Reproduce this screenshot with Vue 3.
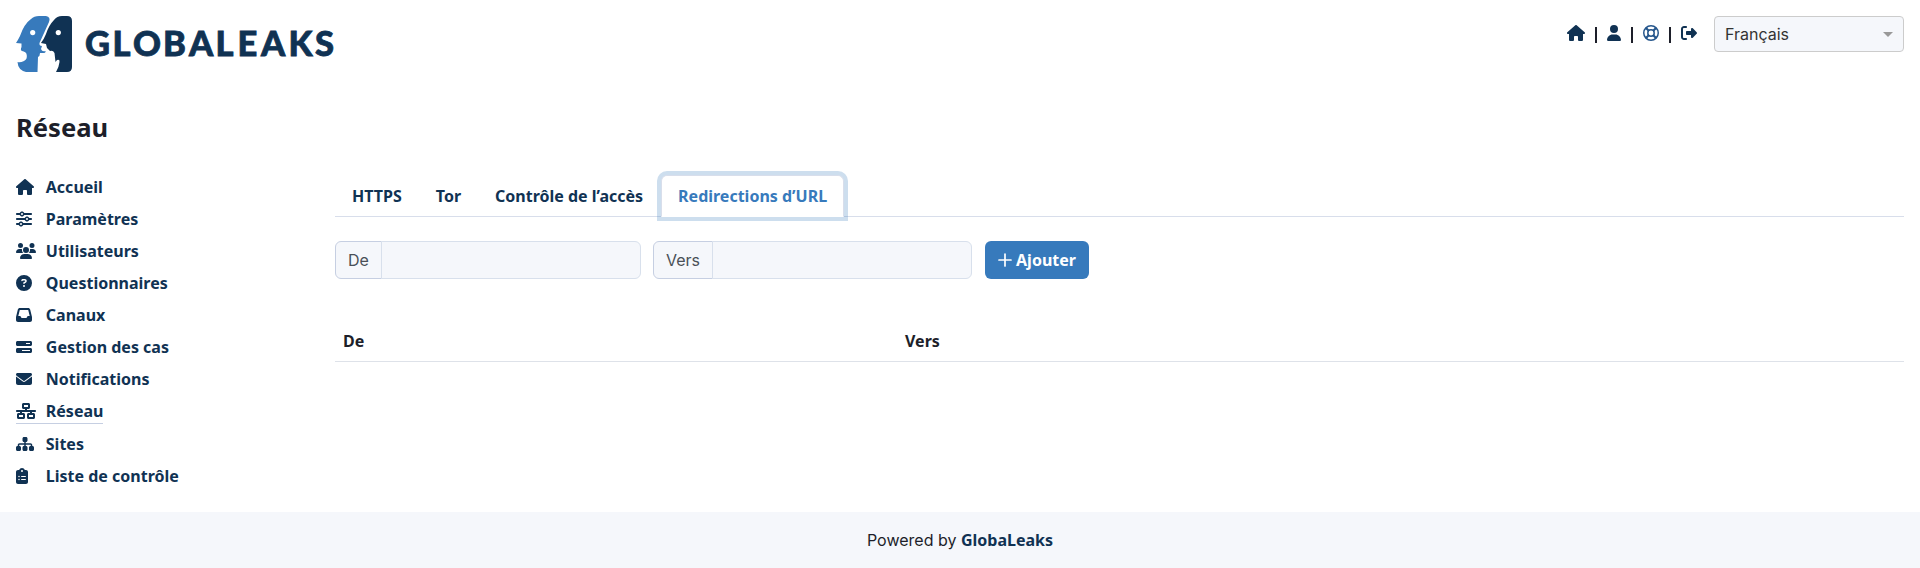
<script setup>
const paths = {
  house: 'M575.8 255.5c0 18-15 32.1-32 32.1h-32l.7 160.2c0 2.7-.2 5.4-.5 8.1V472c0 22.1-17.9 40-40 40H392c-22.1 0-40-17.9-40-40V384c0-17.7-14.3-32-32-32H256c-17.7 0-32 14.3-32 32v88c0 22.1-17.9 40-40 40H104c-22.1 0-40-17.9-40-40V287.6H32c-18 0-32-14-32-32.1c0-9 3-17 10-24L266.4 8c7-7 15-8 22-8s15 2 21 7L564.8 231.5c8 7 12 15 11 24z',
  user: 'M224 256A128 128 0 1 0 224 0a128 128 0 1 0 0 256zm-45.7 48C79.8 304 0 383.8 0 482.3C0 498.7 13.3 512 29.7 512H418.3c16.4 0 29.7-13.3 29.7-29.7C448 383.8 368.2 304 269.7 304H178.3z',
  exit: 'M377.9 105.9L500.7 228.7c7.2 7.2 11.3 17.1 11.3 27.3s-4.1 20.1-11.3 27.3L377.9 406.1c-6.4 6.4-15 9.9-24 9.9c-18.7 0-33.9-15.2-33.9-33.9l0-62.1-128 0c-17.7 0-32-14.3-32-32l0-64c0-17.7 14.3-32 32-32l128 0 0-62.1c0-18.7 15.2-33.9 33.9-33.9c9 0 17.6 3.6 24 9.9zM160 96L96 96c-17.7 0-32 14.3-32 32l0 256c0 17.7 14.3 32 32 32l64 0c17.7 0 32 14.3 32 32s-14.3 32-32 32l-64 0c-53 0-96-43-96-96L0 128C0 75 43 32 96 32l64 0c17.7 0 32 14.3 32 32s-14.3 32-32 32z',
  sliders: 'M0 416c0 17.7 14.3 32 32 32l54.7 0c12.3 28.3 40.5 48 73.3 48s61-19.7 73.3-48L480 448c17.7 0 32-14.3 32-32s-14.3-32-32-32l-246.7 0c-12.3-28.3-40.5-48-73.3-48s-61 19.7-73.3 48L32 384c-17.7 0-32 14.3-32 32zm128 0a32 32 0 1 1 64 0 32 32 0 1 1 -64 0zM320 256a32 32 0 1 1 64 0 32 32 0 1 1 -64 0zm32-80c-32.8 0-61 19.7-73.3 48L32 224c-17.7 0-32 14.3-32 32s14.3 32 32 32l246.7 0c12.3 28.3 40.5 48 73.3 48s61-19.7 73.3-48l54.7 0c17.7 0 32-14.3 32-32s-14.3-32-32-32l-54.7 0c-12.3-28.3-40.5-48-73.3-48zM192 128a32 32 0 1 1 0-64 32 32 0 1 1 0 64zm73.3-64C253 35.7 224.8 16 192 16s-61 19.7-73.3 48L32 64C14.3 64 0 78.3 0 96s14.3 32 32 32l86.7 0c12.3 28.3 40.5 48 73.3 48s61-19.7 73.3-48L480 128c17.7 0 32-14.3 32-32s-14.3-32-32-32L265.3 64z',
  users: 'M144 0a80 80 0 1 1 0 160A80 80 0 1 1 144 0zM512 0a80 80 0 1 1 0 160A80 80 0 1 1 512 0zM0 298.7C0 239.8 47.8 192 106.7 192h42.7c15.9 0 31 3.5 44.6 9.7c-1.3 7.2-1.9 14.7-1.9 22.3c0 38.2 16.8 72.5 43.3 96H21.3C9.6 320 0 310.4 0 298.7zM405.3 320c26.6-23.5 42.6-57.8 42.6-96c0-7.6-.7-15-1.9-22.3c13.6-6.3 28.7-9.7 44.6-9.7h42.7C592.2 192 640 239.8 640 298.7c0 11.8-9.6 21.3-21.3 21.3H405.3zM224 224a96 96 0 1 1 192 0 96 96 0 1 1 -192 0zM128 485.3C128 411.7 187.7 352 261.3 352H378.7C452.3 352 512 411.7 512 485.3c0 14.7-11.9 26.7-26.7 26.7H154.7c-14.7 0-26.7-11.9-26.7-26.7z',
  question: 'M256 512A256 256 0 1 0 256 0a256 256 0 1 0 0 512zM169.8 165.3c7.9-22.3 29.1-37.3 52.8-37.3h58.3c34.9 0 63.1 28.3 63.1 63.1c0 22.6-12.1 43.5-31.7 54.8L280 264.4c-.2 13-10.9 23.6-24 23.6c-13.3 0-24-10.7-24-24V250.5c0-8.6 4.6-16.5 12.1-20.8l44.3-25.4c4.7-2.7 7.6-7.7 7.6-13.1c0-8.4-6.8-15.1-15.1-15.1H222.6c-3.4 0-6.4 2.1-7.5 5.3l-.4 1.2c-4.4 12.5-18.2 19-30.6 14.6s-19-18.2-14.6-30.6l.4-1.2zM224 352a32 32 0 1 1 64 0 32 32 0 1 1 -64 0z',
  inbox: 'M121 32C91.6 32 66 52 58.9 80.5L1.9 308.4C.6 313.5 0 318.7 0 323.9V416c0 35.3 28.7 64 64 64H448c35.3 0 64-28.7 64-64V323.9c0-5.2-.6-10.4-1.9-15.5l-57-227.9C446 52 420.4 32 391 32H121zm0 64H391l48 192H387.8c-12.1 0-23.2 6.8-28.6 17.7l-14.3 28.6c-5.4 10.8-16.5 17.7-28.6 17.7H195.8c-12.1 0-23.2-6.8-28.6-17.7l-14.3-28.6c-5.4-10.8-16.5-17.7-28.6-17.7H73L121 96z',
  progress: 'M448 160H320V128H448v32zM48 64C21.5 64 0 85.5 0 112v64c0 26.5 21.5 48 48 48H464c26.5 0 48-21.5 48-48V112c0-26.5-21.5-48-48-48H48zM448 352v32H192V352H448zM48 288c-26.5 0-48 21.5-48 48v64c0 26.5 21.5 48 48 48H464c26.5 0 48-21.5 48-48V336c0-26.5-21.5-48-48-48H48z',
  envelope: 'M48 64C21.5 64 0 85.5 0 112c0 15.1 7.1 29.3 19.2 38.4L236.8 313.6c11.4 8.5 27 8.5 38.4 0L492.8 150.4c12.1-9.1 19.2-23.3 19.2-38.4c0-26.5-21.5-48-48-48H48zM0 176V384c0 35.3 28.7 64 64 64H448c35.3 0 64-28.7 64-64V176L294.4 339.2c-22.8 17.1-54 17.1-76.8 0L0 176z',
  network: 'M256 64H384v64H256V64zM240 0c-26.5 0-48 21.5-48 48v96c0 26.5 21.5 48 48 48h48v32H32c-17.7 0-32 14.3-32 32s14.3 32 32 32h96v32H80c-26.5 0-48 21.5-48 48v96c0 26.5 21.5 48 48 48H240c26.5 0 48-21.5 48-48V368c0-26.5-21.5-48-48-48H192V288H448v32H400c-26.5 0-48 21.5-48 48v96c0 26.5 21.5 48 48 48H560c26.5 0 48-21.5 48-48V368c0-26.5-21.5-48-48-48H512V288h96c17.7 0 32-14.3 32-32s-14.3-32-32-32H352V192h48c26.5 0 48-21.5 48-48V48c0-26.5-21.5-48-48-48H240zM96 448V384H224v64H96zm320 0V384H544v64H416z',
  sitemap: 'M208 80c0-26.5 21.5-48 48-48h64c26.5 0 48 21.5 48 48v64c0 26.5-21.5 48-48 48h-8v40H464c30.9 0 56 25.1 56 56v32h8c26.5 0 48 21.5 48 48v64c0 26.5-21.5 48-48 48H464c-26.5 0-48-21.5-48-48V368c0-26.5 21.5-48 48-48h8V288c0-4.4-3.6-8-8-8H312v40h8c26.5 0 48 21.5 48 48v64c0 26.5-21.5 48-48 48H256c-26.5 0-48-21.5-48-48V368c0-26.5 21.5-48 48-48h8V280H112c-4.4 0-8 3.6-8 8v32h8c26.5 0 48 21.5 48 48v64c0 26.5-21.5 48-48 48H48c-26.5 0-48-21.5-48-48V368c0-26.5 21.5-48 48-48h8V288c0-30.9 25.1-56 56-56H264V192h-8c-26.5 0-48-21.5-48-48V80z',
  clipboard: 'M192 0c-41.8 0-77.4 26.7-90.5 64H64C28.7 64 0 92.7 0 128V448c0 35.3 28.7 64 64 64H320c35.3 0 64-28.7 64-64V128c0-35.3-28.7-64-64-64H282.5C269.4 26.7 233.8 0 192 0zm0 64a32 32 0 1 1 0 64 32 32 0 1 1 0-64zM72 272a24 24 0 1 1 48 0 24 24 0 1 1 -48 0zm104-16H304c8.8 0 16 7.2 16 16s-7.2 16-16 16H176c-8.8 0-16-7.2-16-16s7.2-16 16-16zM72 368a24 24 0 1 1 48 0 24 24 0 1 1 -48 0zm88 0c0-8.8 7.2-16 16-16H304c8.8 0 16 7.2 16 16s-7.2 16-16 16H176c-8.8 0-16-7.2-16-16z'
}
const menu = [
  { label: 'Accueil', icon: 'house', w: 576 },
  { label: 'Paramètres', icon: 'sliders', w: 512 },
  { label: 'Utilisateurs', icon: 'users', w: 640 },
  { label: 'Questionnaires', icon: 'question', w: 512 },
  { label: 'Canaux', icon: 'inbox', w: 512 },
  { label: 'Gestion des cas', icon: 'progress', w: 512 },
  { label: 'Notifications', icon: 'envelope', w: 512 },
  { label: 'Réseau', icon: 'network', w: 640, active: true },
  { label: 'Sites', icon: 'sitemap', w: 576 },
  { label: 'Liste de contrôle', icon: 'clipboard', w: 384 }
]
const tabs = ['HTTPS', 'Tor', 'Contrôle de l’accès', 'Redirections d’URL']
</script>

<template>
  <div class="page">
    <header class="header">
      <svg class="logo" width="322" height="56" viewBox="0 0 322 56">
        <path fill="#377abc" d="M15 3Q18 0 23 0H30Q35 1 33 6L23.500 27Q23 30 26 30L25 33Q26 36 29.500 35Q30 37 27 37H24Q24 40 22 41L21.500 56H10Q2 54 1.500 46Q4 47 8 45Q12 43 10.500 38Q10 36 6 35Q4 34 5.500 31V27.500L0 27Q2 24 4 20Q8 8 15 3Z" />
        <circle cx="16.700" cy="16.600" r="2.600" fill="#fff" />
        <path fill="#103253" d="M38 4Q41 0 46 0H51Q56 0 56 5V51Q56 56 51 56H40Q43 51 43.500 46Q44 43 41 44L39.500 46L38.500 37Q37 34 34 35Q32 33 31 32L30 28L25 27Q28 23 30 18Q33 9 38 4Z" />
        <circle cx="42.300" cy="16.600" r="2.600" fill="#fff" />
        <text class="wordmark" x="69 96.500 117 147 173 199.500 221.500 245 272.500 299" y="39.500">GLOBALEAKS</text>
      </svg>
      <div class="tools">
        <svg class="icon" width="18" height="16" viewBox="0 0 576 512"><path :d="paths.house" /></svg>
        <span class="bar"></span>
        <svg class="icon" width="14" height="16" viewBox="0 0 448 512"><path :d="paths.user" /></svg>
        <span class="bar"></span>
        <svg class="ring" width="16" height="16" viewBox="0 0 16 16" fill="none" stroke-width="1.500">
          <circle cx="8" cy="8" r="7.250" /><circle cx="8" cy="8" r="3.200" />
          <path stroke-width="2.200" d="M3 3l2.700 2.700M13 3l-2.700 2.700M3 13l2.700-2.700M13 13l-2.700-2.700" />
        </svg>
        <span class="bar"></span>
        <svg class="icon" width="16" height="16" viewBox="0 0 512 512"><path :d="paths.exit" /></svg>
        <div class="select"><span>Français</span><i class="caret"></i></div>
      </div>
    </header>

    <h1 class="title">Réseau</h1>

    <div class="body">
      <nav class="menu">
        <a v-for="m in menu" :key="m.label" class="item" :class="{ active: m.active }">
          <span class="slot"><svg class="icon" :width="m.w / 32" height="16" :viewBox="`0 0 ${m.w} 512`"><path :d="paths[m.icon]" fill-rule="evenodd" /></svg></span>
          <span>{{ m.label }}</span>
        </a>
      </nav>
      <main class="main">
        <div class="tabs">
          <a v-for="(t, i) in tabs" :key="t" class="tab" :class="{ current: i === 3 }">{{ t }}</a>
        </div>
        <div class="form">
          <div class="group from"><label>De</label><input type="text" /></div>
          <div class="group to"><label>Vers</label><input type="text" /></div>
          <button class="add">
            <svg width="14" height="14" viewBox="0 0 14 14" stroke="#fff" stroke-width="1.700" stroke-linecap="round"><path d="M7 1v12M1 7h12" /></svg>
            <span>Ajouter</span>
          </button>
        </div>
        <div class="thead"><span>De</span><span>Vers</span><span></span></div>
      </main>
    </div>
    <footer class="footer"><span>Powered by <b>GlobaLeaks</b></span></footer>
  </div>
</template>

<style>
body { margin: 0; background: #fff; }
</style>

<style scoped>
.page {
  box-sizing: border-box;
  height: 568px;
  display: flex;
  flex-direction: column;
  font: 400 16px/24px Inter, "Noto Sans", sans-serif;
  color: #1d1f2a;
  overflow: hidden;
}
.header { display: flex; justify-content: space-between; padding: 16px 16px 0; height: 56px; }
.logo { display: block; flex: none; }
.wordmark { font: 900 34.500px Lato, sans-serif; fill: #103253; stroke: #103253; stroke-width: .8px; }
.tools { display: flex; align-items: flex-start; }
.icon { display: block; fill: #103253; margin-top: 9px; }
.ring { stroke: #25568c; margin-top: 9px; }
.bar { width: 2px; height: 16px; margin: 11px 10px 0; background: #1d1f2a; }
.select {
  box-sizing: border-box;
  width: 190px;
  height: 36px;
  margin-left: 17.500px;
  padding: 0 10px;
  display: flex;
  align-items: center;
  justify-content: space-between;
  border: 1px solid #ccc;
  border-radius: 4px;
  background: #f5f7fb;
  color: #333;
}
.caret { border: 5px solid transparent; border-top-color: #999; border-bottom: 0; }
.title { margin: 40px 16px 0; font: 700 25.600px/32px "Noto Sans", sans-serif; }
.body { display: flex; margin-top: 31px; padding: 0 16px; flex: 1; }
.menu { width: 319px; display: flex; flex-direction: column; align-items: flex-start; gap: 8px; font: 700 16px/24px "Noto Sans", sans-serif; color: #103253; }
.item { display: flex; }
.item .icon { margin-top: 4px; }
.slot { width: 29.800px; }
.active { border-bottom: 1px solid #c6cfe2; }
.main { flex: 1; }
.tabs { display: flex; height: 41px; border-bottom: 1px solid #d8deeb; font: 700 16px/24px "Noto Sans", sans-serif; color: #103253; }
.tab { box-sizing: border-box; height: 42px; padding: 8px 16px; border: 1px solid transparent; border-radius: 6px 6px 0 0; }
.current { margin-left: 1px; padding-right: 15.500px; color: #377abc; background: #fff; border-color: #d8deeb #d8deeb #fff; box-shadow: 0 0 0 4px rgba(55, 122, 188, .25); }
.form { display: flex; margin-top: 24px; }
.group { display: flex; height: 38px; }
.from { width: 306px; margin-right: 12px; }
.to { width: 319px; margin-right: 13px; }
.group label { box-sizing: border-box; padding: 6px 12px; border: 1px solid #c6cfe2; border-radius: 6px 0 0 6px; background: #f5f7fb; color: #495057; }
.group input { box-sizing: border-box; flex: 1; min-width: 0; margin-left: -1px; border: 1px solid #d8e0ec; border-radius: 0 6px 6px 0; background: #f5f7fb; }
.add { display: flex; align-items: center; justify-content: center; gap: 4px; width: 104px; height: 38px; padding: 0; border: 0; border-radius: 6px; background: #377abc; color: #fff; font: 700 16px/24px "Noto Sans", sans-serif; }
.thead { display: grid; grid-template-columns: 562px 562px 1fr; margin-top: 42px; padding: 8px 0; border-bottom: 1px solid #dee2e9; font: 700 16px/24px "Noto Sans", sans-serif; }
.thead span { padding: 0 8px; }
.footer { height: 56px; display: flex; align-items: center; justify-content: center; background: #f5f7fb; }
.footer b { font-family: "Noto Sans", sans-serif; color: #103253; }
</style>
